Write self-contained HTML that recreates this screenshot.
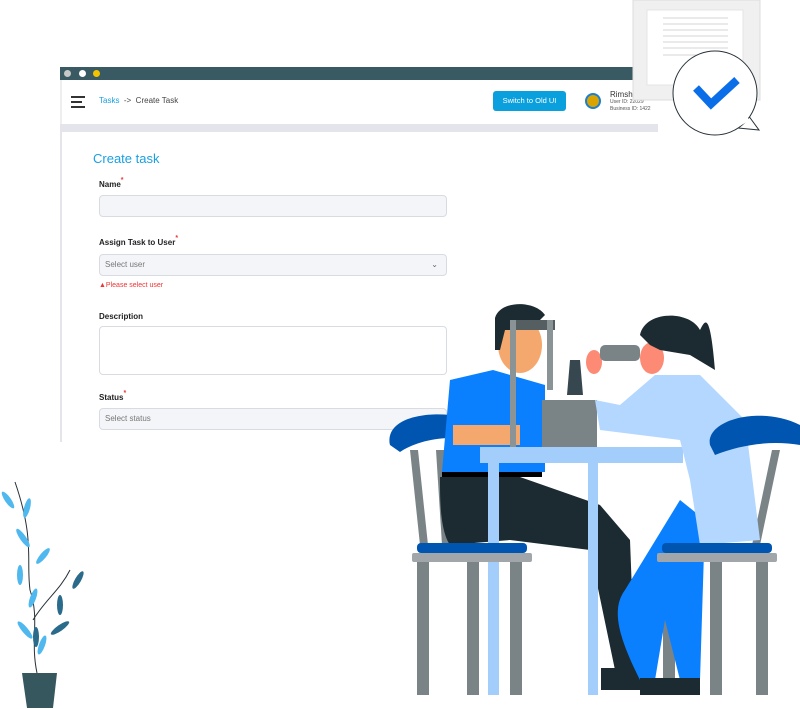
<!DOCTYPE html>
<html><head><meta charset="utf-8"><style>
*{margin:0;padding:0;box-sizing:border-box}
body{width:800px;height:709px;background:#fff;position:relative;overflow:hidden;font-family:"Liberation Sans",sans-serif}
.a{position:absolute}
.lbl{position:absolute;font-size:8px;font-weight:bold;color:#222}
.lbl b{color:#e33;font-size:7px;vertical-align:top;position:relative;top:-3px}
.inp{position:absolute;left:99px;width:348px;background:#f4f5f9;border:1px solid #d8dbe0;border-radius:4px;font-size:8px;color:#777;padding-left:5px}
</style></head><body>
<div class="a" style="left:60px;top:67px;width:600px;height:13px;background:#3a5a63"></div>
<div class="a" style="left:64px;top:70px;width:7px;height:7px;border-radius:50%;background:#c8c8c8"></div>
<div class="a" style="left:79px;top:70px;width:7px;height:7px;border-radius:50%;background:#fff"></div>
<div class="a" style="left:93px;top:70px;width:7px;height:7px;border-radius:50%;background:#f5c400"></div>
<div class="a" style="left:60px;top:80px;width:600px;height:44px;background:#fff;border-left:2px solid #eee"></div>
<div class="a" style="left:71px;top:96px;width:14px;height:1.5px;background:#333"></div>
<div class="a" style="left:71px;top:101px;width:11px;height:1.5px;background:#333"></div>
<div class="a" style="left:71px;top:106px;width:14px;height:1.5px;background:#333"></div>
<div class="a" style="left:99px;top:96px;font-size:8px;color:#1aa0e0">Tasks <span style="color:#444">&nbsp;-&gt;&nbsp; Create Task</span></div>
<div class="a" style="left:493px;top:91px;width:73px;height:20px;background:#0aa0dd;border-radius:3px;color:#fff;font-size:7.5px;text-align:center;line-height:20px">Switch to Old UI</div>
<div class="a" style="left:585px;top:93px;width:16px;height:16px;border-radius:50%;background:#d9a300;border:2px solid #1b7fd0"></div>
<div class="a" style="left:610px;top:90px;font-size:8px;color:#333">Rimsha</div>
<div class="a" style="left:610px;top:99px;font-size:5px;color:#555;line-height:7px">User ID: 22029<br>Business ID: 1422</div>
<div class="a" style="left:60px;top:124px;width:598px;height:8px;background:#e3e5ea"></div>
<div class="a" style="left:60px;top:132px;width:2px;height:310px;background:#e3e5ea"></div>
<div class="a" style="left:93px;top:151px;font-size:13px;color:#1aa0e0">Create task</div>
<div class="lbl" style="left:99px;top:180px">Name<b>*</b></div>
<div class="inp" style="top:195px;height:22px"></div>
<div class="lbl" style="left:99px;top:238px">Assign Task to User<b>*</b></div>
<div class="inp" style="top:254px;height:22px;line-height:20px">Select user<span style="position:absolute;right:8px;color:#666">&#8964;</span></div>
<div class="a" style="left:99px;top:282px;font-size:7px;color:#e33">&#9650;Please select user</div>
<div class="lbl" style="left:99px;top:312px">Description</div>
<div class="inp" style="top:326px;height:49px;background:#fff"></div>
<div class="lbl" style="left:99px;top:393px">Status<b>*</b></div>
<div class="inp" style="top:408px;height:22px;line-height:20px">Select status</div>

<svg class="a" style="left:0;top:0" width="800" height="709" viewBox="0 0 800 709">
<!-- document -->
<rect x="633" y="0" width="127" height="100" fill="#f0f0f0" stroke="#ddd"/>
<rect x="647" y="10" width="96" height="75" fill="#fff" stroke="#e5e5e5"/>
<g stroke="#e4e4e4" stroke-width="1.5"><line x1="663" y1="18" x2="728" y2="18"/><line x1="663" y1="24" x2="728" y2="24"/><line x1="663" y1="30" x2="728" y2="30"/><line x1="663" y1="36" x2="728" y2="36"/><line x1="663" y1="42" x2="728" y2="42"/><line x1="663" y1="48" x2="728" y2="48"/><line x1="663" y1="55" x2="728" y2="55"/></g>
<path d="M748 115 L759 130 L738 128" fill="#fff" stroke="#263238" stroke-width="1"/>
<circle cx="715" cy="93" r="42" fill="#fff" stroke="#263238" stroke-width="1"/>
<path d="M741 112 L750 120 L740 126Z" fill="#fff"/>
<path d="M696 88 L711 104 L737 80" fill="none" stroke="#0a6ee8" stroke-width="8"/>
<!-- plant -->
<path d="M37 673 C30 640 40 620 30 590 C26 560 35 540 15 482 M33 620 C45 600 60 590 70 570" stroke="#263238" stroke-width="1" fill="none"/>
<g fill="#4fb8ee"><ellipse cx="8" cy="500" rx="3" ry="10" transform="rotate(-35 8 500)"/><ellipse cx="27" cy="508" rx="3" ry="10" transform="rotate(15 27 508)"/><ellipse cx="23" cy="538" rx="3" ry="11" transform="rotate(-35 23 538)"/><ellipse cx="43" cy="556" rx="3" ry="10" transform="rotate(40 43 556)"/><ellipse cx="20" cy="575" rx="3" ry="10"/><ellipse cx="33" cy="598" rx="3" ry="10" transform="rotate(20 33 598)"/><ellipse cx="25" cy="630" rx="3" ry="11" transform="rotate(-40 25 630)"/><ellipse cx="42" cy="645" rx="3" ry="10" transform="rotate(20 42 645)"/></g>
<g fill="#2a6a8a"><ellipse cx="60" cy="605" rx="3" ry="10"/><ellipse cx="78" cy="580" rx="3" ry="10" transform="rotate(30 78 580)"/><ellipse cx="60" cy="628" rx="3" ry="11" transform="rotate(55 60 628)"/><ellipse cx="36" cy="637" rx="3" ry="10"/></g>
<path d="M22 673 H57 L53 708 H27Z" fill="#37575f"/>
<!-- left chair -->
<g fill="#7a8487"><path d="M410 450 L418 450 L428 545 L420 545Z"/><path d="M436 450 L444 450 L450 545 L442 545Z"/><rect x="417" y="562" width="12" height="133"/><rect x="467" y="562" width="12" height="133"/><rect x="510" y="562" width="12" height="133"/></g>
<path d="M390 445 C385 420 420 412 450 415 L450 438 C430 438 410 445 400 452Z" fill="#0055b0"/>
<!-- right chair -->
<g fill="#7a8487"><path d="M730 450 L738 450 L712 545 L704 545Z"/><path d="M772 450 L780 450 L760 545 L752 545Z"/><rect x="663" y="562" width="12" height="133"/><rect x="710" y="562" width="12" height="133"/><rect x="756" y="562" width="12" height="133"/></g>
<!-- man -->
<path d="M440 477 L520 477 L600 505 L630 540 L635 670 L615 670 L590 550 L510 540 L450 545 C440 530 440 500 440 477Z" fill="#1b2b31"/>
<path d="M442 472 L450 380 L493 370 L545 385 L545 472Z" fill="#0a80ff"/>
<rect x="442" y="472" width="100" height="5" fill="#000"/>
<path d="M453 425 L453 445 L520 445 L520 425Z" fill="#f5a86e"/>
<ellipse cx="520" cy="345" rx="22" ry="28" fill="#f5a86e"/>
<path d="M495 318 C500 300 535 300 545 315 L530 330 L505 330 L500 350 L495 350Z" fill="#1b2b31"/>
<path d="M601 668 L640 668 L640 690 L601 690Z" fill="#1b2b31"/>
<!-- slit lamp -->
<rect x="510" y="320" width="45" height="10" fill="#555e61"/>
<rect x="510" y="320" width="6" height="130" fill="#8a9497"/>
<rect x="547" y="320" width="6" height="70" fill="#8a9497"/>
<rect x="542" y="400" width="55" height="47" fill="#7a8487"/>
<path d="M570 360 L580 360 L583 395 L567 395Z" fill="#37474f"/>
<!-- table -->
<rect x="480" y="447" width="203" height="16" fill="#a3cdfb"/>
<rect x="488" y="463" width="11" height="232" fill="#a3cdfb"/>
<rect x="588" y="463" width="10" height="232" fill="#a3cdfb"/>
<!-- woman -->
<path d="M625 590 L680 500 L705 520 L700 680 L680 680 L665 620 L655 680 L640 680 C620 640 610 610 625 590Z" fill="#0a80ff"/>
<path d="M595 400 L620 405 L655 375 L700 375 L745 420 L760 540 L700 545 L690 480 L680 440 L600 430Z" fill="#b3d7ff"/>
<ellipse cx="652" cy="358" rx="12" ry="16" fill="#fd8a74"/>
<ellipse cx="594" cy="362" rx="8" ry="12" fill="#fd8a74"/>
<path d="M640 335 C645 310 690 310 700 330 C705 320 710 310 715 370 L690 355 L660 350 L650 345Z" fill="#1b2b31"/>
<rect x="600" y="345" width="40" height="16" rx="5" fill="#7a8487"/>
<path d="M640 678 H700 V695 H640Z" fill="#1b2b31"/>
<!-- chair seats & backs front -->
<rect x="417" y="543" width="110" height="10" rx="4" fill="#0055b0"/>
<rect x="412" y="553" width="120" height="9" rx="2" fill="#a0a6a9"/>
<path d="M710 445 C705 420 760 405 800 425 L800 445 C770 440 740 445 715 455Z" fill="#0055b0"/>
<rect x="662" y="543" width="110" height="10" rx="4" fill="#0055b0"/>
<rect x="657" y="553" width="120" height="9" rx="2" fill="#a0a6a9"/>
</svg>
</body></html>
